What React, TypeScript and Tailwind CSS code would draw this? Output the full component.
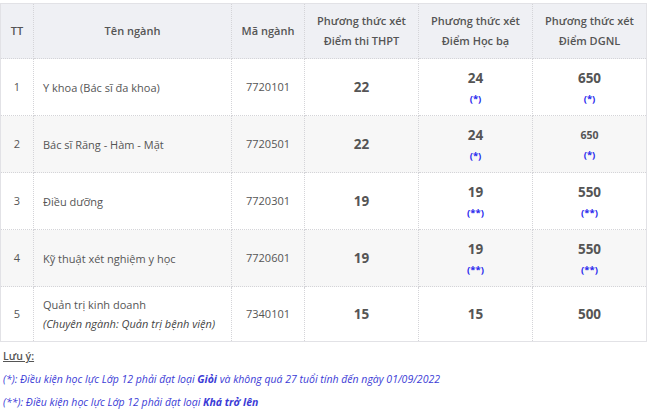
const rows = [
  { tt: "1", name: "Y khoa (Bác sĩ đa khoa)", code: "7720101", thpt: "22", hb: "24", hbNote: "(*)", dgnl: "650", dgnlNote: "(*)" },
  { tt: "2", name: "Bác sĩ Răng - Hàm - Mặt", code: "7720501", thpt: "22", hb: "24", hbNote: "(*)", dgnl: "650", dgnlNote: "(*)", small: true },
  { tt: "3", name: "Điều dưỡng", code: "7720301", thpt: "19", hb: "19", hbNote: "(**)", dgnl: "550", dgnlNote: "(**)" },
  { tt: "4", name: "Kỹ thuật xét nghiệm y học", code: "7720601", thpt: "19", hb: "19", hbNote: "(**)", dgnl: "550", dgnlNote: "(**)" },
  { tt: "5", name: "Quản trị kinh doanh", sub: "(Chuyên ngành: Quản trị bệnh viện)", code: "7340101", thpt: "15", hb: "15", dgnl: "500" },
];

const cell = "border border-dotted border-[#d4d4d8]";

function Score({ value, note, small }: { value: string; note?: string; small?: boolean }) {
  return (
    <div className="flex flex-col items-center">
      <span className={small ? "text-[10.5px] font-bold leading-[18px]" : "text-[13.5px] font-bold leading-[20px]"}>{value}</span>
      {note && <span className="text-[9.5px] font-bold leading-[14px] mt-[4px] text-[#2a2aee]">{note}</span>}
    </div>
  );
}

export default function App() {
  return (
    <div className="w-[660px] h-[416px] bg-white pt-[3px] text-[#555] overflow-hidden" style={{ fontFamily: '"Open Sans", sans-serif' }}>
      <table className="w-[646px] border-collapse border border-solid border-[#e2e2e6] table-fixed text-[11px]">
        <colgroup>
          <col className="w-[33px]" />
          <col className="w-[198px]" />
          <col className="w-[73px]" />
          <col className="w-[114px]" />
          <col className="w-[114px]" />
          <col className="w-[114px]" />
        </colgroup>
        <thead>
          <tr className="h-[55px] bg-[#eff0f4] leading-[20px]">
            <th className={`${cell} font-semibold`}>TT</th>
            <th className={`${cell} font-semibold`}>Tên ngành</th>
            <th className={`${cell} font-semibold`}>Mã ngành</th>
            <th className={`${cell} font-semibold`}>Phương thức xét<br />Điểm thi THPT</th>
            <th className={`${cell} font-semibold`}>Phương thức xét<br />Điểm Học bạ</th>
            <th className={`${cell} font-semibold`}>Phương thức xét<br />Điểm DGNL</th>
          </tr>
        </thead>
        <tbody>
          {rows.map((r, i) => (
            <tr key={r.tt} className={`${i === 4 ? "h-[55px]" : "h-[57px]"} ${i % 2 === 1 ? "bg-[#f7f7f7]" : "bg-white"}`}>
              <td className={`${cell} text-center`}>{r.tt}</td>
              <td className={`${cell} pl-[9px] leading-[19px]`}>
                <div>{r.name}</div>
                {r.sub && <div className="italic text-[#444]">{r.sub}</div>}
              </td>
              <td className={`${cell} text-center`}>{r.code}</td>
              <td className={`${cell} text-center`}><Score value={r.thpt} /></td>
              <td className={`${cell} text-center`}><Score value={r.hb} note={r.hbNote} /></td>
              <td className={`${cell} text-center`}><Score value={r.dgnl} note={r.dgnlNote} small={r.small} /></td>
            </tr>
          ))}
        </tbody>
      </table>
      <div className="mt-[3px] text-[10.5px] leading-[23px]">
        <div className="pl-[3px]"><span className="underline font-semibold text-[#555]">Lưu ý:</span></div>
        <div className="pl-[3px] italic text-[#3b3bd6]">
          (*): Điều kiện học lực Lớp 12 phải đạt loại <b>Giỏi</b> và không quá 27 tuổi tính đến ngày 01/09/2022
        </div>
        <div className="pl-[3px] italic text-[#3b3bd6]">
          (**): Điều kiện học lực Lớp 12 phải đạt loại <b>Khá trở lên</b>
        </div>
      </div>
    </div>
  );
}
